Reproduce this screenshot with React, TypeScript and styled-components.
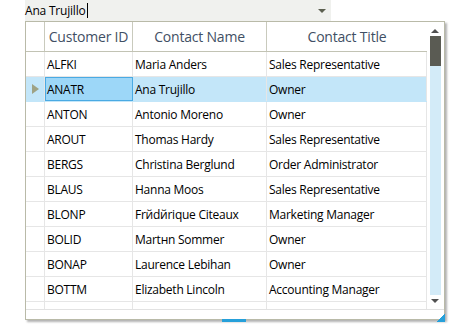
import React from 'react';
import styled, { createGlobalStyle } from 'styled-components';

const GlobalStyle = createGlobalStyle`
  html, body {
    margin: 0;
    padding: 0;
    background: #ffffff;
    font-family: "Open Sans", "Noto Sans", sans-serif;
  }
`;

const Page = styled.div`
  width: 470px;
  height: 328px;
  overflow: hidden;
  display: flex;
  flex-direction: column;
  padding-left: 25px;
  box-sizing: border-box;
`;

const Combo = styled.div`
  width: 306px;
  height: 21px;
  background: #f0f1ee;
  display: flex;
  align-items: center;
  justify-content: space-between;
  box-sizing: border-box;
  padding: 0 5px 0 0;
  font-size: 12px;
  color: #000;
`;

const ComboText = styled.span`
  display: flex;
  align-items: center;
  letter-spacing: -0.2px;
`;

const Caret = styled.span`
  display: inline-block;
  width: 1px;
  height: 15px;
  background: #000;
  margin-left: 1px;
`;

const Popup = styled.div`
  position: relative;
  width: 420px;
  height: 299px;
  box-sizing: border-box;
  border: 1px solid #b9baa8;
  background: #fff;
  box-shadow: 2px 2px 2px rgba(0, 0, 0, 0.3);
  display: flex;
  flex-direction: column;
`;

const GridArea = styled.div`
  display: flex;
  height: 287px;
  border-bottom: 1px solid #e2e2e2;
`;

const Table = styled.div`
  width: 401px;
  overflow: hidden;
  display: flex;
  flex-direction: column;
`;

const cols = '19px 88px 134px 160px';

const HeaderRow = styled.div`
  display: grid;
  grid-template-columns: ${cols};
  height: 30px;
  flex-shrink: 0;
  box-sizing: border-box;
  border-bottom: 1px solid #c2c3b4;
`;

const HeaderCell = styled.div<{ $last?: boolean }>`
  display: flex;
  align-items: center;
  justify-content: center;
  font-size: 14px;
  color: #3f4f64;
  letter-spacing: -0.2px;
  border-right: ${({ $last }) => ($last ? 'none' : '1px solid #c9cabd')};
  box-sizing: border-box;
  padding-bottom: 1px;
`;

const Row = styled.div<{ $selected?: boolean }>`
  display: grid;
  grid-template-columns: ${cols};
  height: 25px;
  flex-shrink: 0;
  box-sizing: border-box;
  border-bottom: 1px solid ${({ $selected }) => ($selected ? '#c3e6f9' : '#e6e6e6')};
  background: ${({ $selected }) => ($selected ? '#c3e6f9' : '#fff')};
`;

const Cell = styled.div<{ $current?: boolean }>`
  display: flex;
  align-items: center;
  padding-left: 2px;
  font-size: 12px;
  color: #000;
  letter-spacing: -0.25px;
  white-space: nowrap;
  overflow: hidden;
  box-sizing: border-box;
  border-right: 1px solid ${({ $current }) => ($current ? '#4aaae3' : '#e6e6e6')};
  ${({ $current }) =>
    $current &&
    `
    background: #9dd7f8;
    border: 1px solid #4aaae3;
    padding-left: 1px;
  `}
`;

const RowHead = styled.div`
  display: flex;
  align-items: center;
  justify-content: center;
  border-right: 1px solid #e6e6e6;
  box-sizing: border-box;
`;

const Marker = styled.span`
  width: 0;
  height: 0;
  border-top: 5px solid transparent;
  border-bottom: 5px solid transparent;
  border-left: 7px solid #9fa284;
  margin-left: 1px;
`;

const ScrollBar = styled.div`
  width: 17px;
  display: flex;
  flex-direction: column;
  align-items: center;
  padding: 3px 2px 3px 1px;
  box-sizing: border-box;
`;

const Arrow = styled.span<{ $down?: boolean; $color?: string; $flush?: boolean }>`
  width: 0;
  height: 0;
  border-left: 4px solid transparent;
  border-right: 4px solid transparent;
  ${({ $down, $color = '#505050' }) =>
    $down ? `border-top: 4px solid ${$color};` : `border-bottom: 4px solid ${$color};`}
  margin: ${({ $flush }) => ($flush ? '0' : '4px 0 3px')};
`;

const Track = styled.div`
  flex: 1;
  width: 11px;
  background: #d3ebf8;
  display: flex;
  flex-direction: column;
`;

const Thumb = styled.div`
  height: 30px;
  background: #5a5b53;
`;

const Footer = styled.div`
  flex: 1;
`;

const Grip = styled.span`
  position: absolute;
  left: 196px;
  bottom: -3px;
  width: 24px;
  height: 3px;
  background: #26a0da;
`;

const Corner = styled.span`
  position: absolute;
  right: -1px;
  bottom: -3px;
  width: 8px;
  height: 9px;
  background: linear-gradient(to top left, #26a0da 50%, transparent 50%);
`;

const customers = [
  ['ALFKI', 'Maria Anders', 'Sales Representative'],
  ['ANATR', 'Ana Trujillo', 'Owner'],
  ['ANTON', 'Antonio Moreno', 'Owner'],
  ['AROUT', 'Thomas Hardy', 'Sales Representative'],
  ['BERGS', 'Christina Berglund', 'Order Administrator'],
  ['BLAUS', 'Hanna Moos', 'Sales Representative'],
  ['BLONP', 'Frйdйrique Citeaux', 'Marketing Manager'],
  ['BOLID', 'Martнn Sommer', 'Owner'],
  ['BONAP', 'Laurence Lebihan', 'Owner'],
  ['BOTTM', 'Elizabeth Lincoln', 'Accounting Manager'],
  ['', '', ''],
];

const App = (): JSX.Element => (
  <>
    <GlobalStyle />
    <Page>
      <Combo>
        <ComboText>
          Ana Trujillo
          <Caret />
        </ComboText>
        <Arrow $down $flush $color="#5c6050" />
      </Combo>
      <Popup>
        <GridArea>
          <Table>
            <HeaderRow>
              <HeaderCell />
              <HeaderCell>Customer ID</HeaderCell>
              <HeaderCell>Contact Name</HeaderCell>
              <HeaderCell $last>Contact Title</HeaderCell>
            </HeaderRow>
            {customers.map(([id, name, title], i) => {
              const selected = id === 'ANATR';
              return (
                <Row key={i} $selected={selected}>
                  <RowHead>{selected && <Marker />}</RowHead>
                  <Cell $current={selected}>{id}</Cell>
                  <Cell>{name}</Cell>
                  <Cell>{title}</Cell>
                </Row>
              );
            })}
          </Table>
          <ScrollBar>
            <Arrow />
            <Track>
              <Thumb />
            </Track>
            <Arrow $down />
          </ScrollBar>
        </GridArea>
        <Footer />
        <Grip />
        <Corner />
      </Popup>
    </Page>
  </>
);

export default App;
